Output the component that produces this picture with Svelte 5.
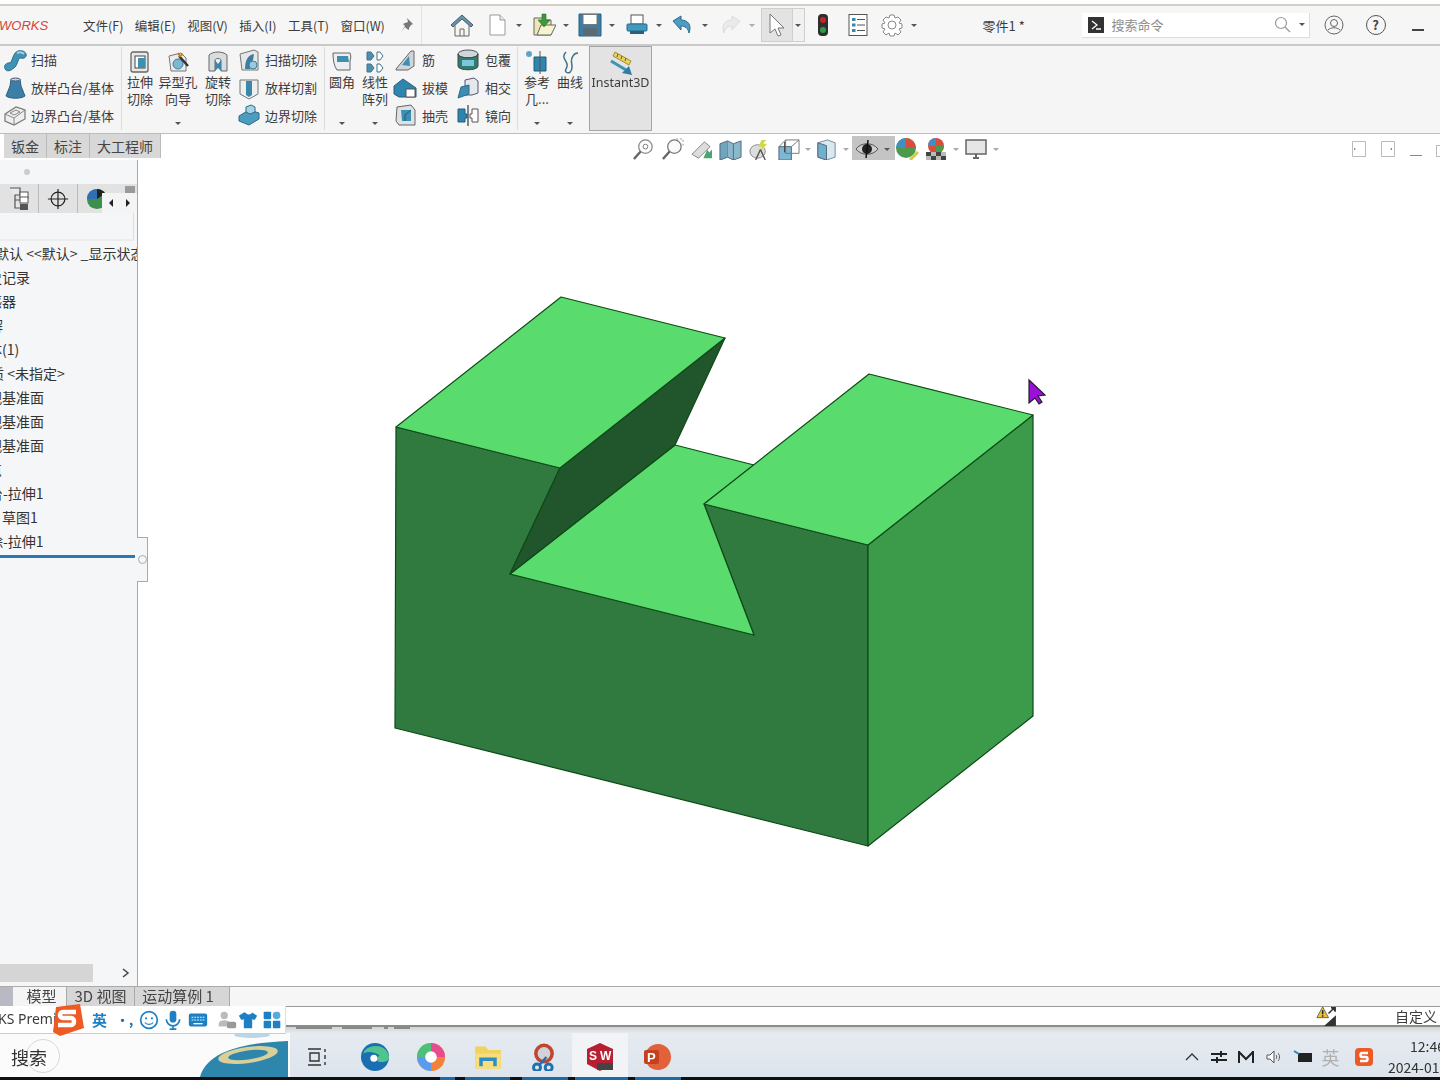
<script>
	const icons = {
		sweep: '<path d="M3 22c-3-3-1-7 3-7 4 0 3-10 9-12 3-1 7 0 8 3 1 3-2 5-5 4-3-1-3 6-6 9-3 3-7 5-9 3z" fill="#3f93b5" stroke="#2a6a88"/><path d="M14 5c2-1 5-1 7 1" stroke="#9fd3e6" fill="none" stroke-width="2"/>',
		loft: '<path d="M8 3h9l1 7 4 10c-4 3-15 3-19 0l4-10z" fill="#3c7fa6" stroke="#2c5f7f"/><ellipse cx="12.500" cy="3.500" rx="4.500" ry="1.500" fill="#b9d8e6" stroke="#557"/>',
		bound: '<path d="M2 11l11-7 9 3v9l-11 6-9-4z" fill="#eee" stroke="#777" stroke-width="1.200"/><path d="M2 11l9 4 11-8M11 15v7M7 10l6-3 4 2-6 3z" fill="none" stroke="#888"/>',
		cutExt: '<rect x="3" y="2" width="17" height="20" rx="2" fill="#e8e8e6" stroke="#666" stroke-width="1.300"/><rect x="7" y="6" width="10" height="12" fill="#fff" stroke="#444"/><rect x="10" y="8" width="7" height="10" fill="#3f8fb0"/>',
		hole: '<path d="M3 6l12-3 5 5v13H5z" fill="#ececec" stroke="#777"/><circle cx="12" cy="14" r="5" fill="#7db7d2" stroke="#3d7d9d"/><path d="M13 6l9 10" stroke="#333" stroke-width="2.500"/><path d="M12 3l2 3 3-2" fill="none" stroke="#c7851f" stroke-width="2"/>',
		cutRev: '<path d="M3 5c4-4 14-4 18 0v16h-6V10c-1-2-5-2-6 0v11H3z" fill="#d8dde0" stroke="#666"/><path d="M9 10l3 4 3-4v11l-3-3-3 3z" fill="#3c86a8"/>',
		cutSweep: '<path d="M3 6l14-4 4 2v18H5z" fill="#e5e7e8" stroke="#777"/><path d="M8 21c0-9 3-14 9-15l-1 6c-2 1-3 4-3 9z" fill="#3b7ea2"/><circle cx="16" cy="17" r="4" fill="#9dc9dc" stroke="#3d7d9d"/>',
		cutLoft: '<path d="M3 4h18v14l-9 5-9-5z" fill="#eceeef" stroke="#777"/><path d="M9 5h6v14l-3 2-3-2z" fill="#3c86a8"/>',
		cutBound: '<path d="M2 13l10-6 10 3v6l-10 6-10-4z" fill="#4c9cc0" stroke="#2c6a88"/><path d="M9 9V4l5-2 4 2v5l-5 2z" fill="#a5d2e5" stroke="#2c6a88"/>',
		fillet: '<path d="M3 3h17c1 3 1 5 0 8v9H7c-3-4-4-10-4-17z" fill="#eceeef" stroke="#666"/><path d="M7 6h11l1 6H7z" fill="#3c8fb3"/>',
		pattern: '<path d="M4 2h4l3 4-3 4H4zM4 14h4l3 4-3 4H4z" fill="#4c8fae" stroke="#47708a"/><path d="M14 2h3l3 4-3 4h-3zM14 14h3l3 4-3 4h-3z" fill="#fff" stroke="#47708a"/>',
		rib: '<path d="M3 21L18 3h3v15l-6 4H3z" fill="#cfd6d9" stroke="#666"/><path d="M9 17l7-9 1 10z" fill="#3c8fb3"/>',
		draft: '<path d="M1 10L10 3l13 9v9H6L1 18z" fill="#2f85ad" stroke="#265f7d"/><path d="M13 13h9v8h-9z" fill="#fff" stroke="#555"/>',
		shell: '<path d="M4 4l14-2 4 5v15H6L3 18z" fill="#dde2e4" stroke="#666"/><path d="M8 7h10v11H9z" fill="#3c8fb3"/><path d="M12 12l6-5M12 12v6" stroke="#1e5a78"/>',
		wrap: '<ellipse cx="12" cy="6" rx="10" ry="4" fill="#cfd6d9" stroke="#555"/><path d="M2 6v12c0 5 20 5 20 0V6c0 5-20 5-20 0z" fill="#2f7d6f" stroke="#444"/><rect x="6" y="12" width="12" height="6" fill="#7fc4dd"/>',
		intersect: '<path d="M9 4l9-2 4 3v12l-6 2H9z" fill="#e3e8ea" stroke="#557"/><path d="M2 22l3-11 8-2v9z" fill="#3c8fb3" stroke="#2c6a88"/>',
		mirror: '<path d="M2 6h7v5h2v4H9v4H2z" fill="#2f85ad" stroke="#1f5f7d"/><path d="M12 2v21" stroke="#444" stroke-width="1.300"/><path d="M22 6h-6v5h-2v4h2v4h6z" fill="#fff" stroke="#555"/>',
		ref: '<circle cx="4" cy="4" r="3" fill="#5da5c2"/><path d="M9 7h12v14H9z" fill="#2f85ad" stroke="#1f5f7d"/><path d="M15 1v24" stroke="#555"/>',
		curve: '<path d="M8 2c-5 5 0 8 1 12 1 5-3 5-1 8 3 2 6 0 6-5s-2-7 1-11c1-2 3-3 5-3" fill="none" stroke="#3f7387" stroke-width="1.500"/>',
		instant: '<path d="M6 1l16 9-2 4L4 5z" fill="#e8d25a" stroke="#8d7a20" stroke-width=".8"/><path d="M9 3l-1 3M13 5l-1 3M17 7l-1 3" stroke="#6d5f18"/><path d="M2 10l15 9" stroke="#3f93b5" stroke-width="3"/><path d="M13 22l10 2-3-9z" fill="#2f7da3"/>',
		home: '<path d="M1 12L12 2l11 10-2 2-9-8-9 8z" fill="#5f97a3" stroke="#557"/><path d="M5 12v11h14V12" fill="#f6f6ef" stroke="#666"/><path d="M10 23v-7h4v7" fill="none" stroke="#666"/>',
		doc: '<path d="M5 2h10l5 5v15H5z" fill="#fff" stroke="#999"/><path d="M15 2v5h5" fill="#eee" stroke="#999"/>',
		open: '<path d="M2 5h8l2 2h7v15H2z" fill="#efe6b4" stroke="#666"/><path d="M5 22l4-10h15l-5 10z" fill="#f7f2d0" stroke="#666"/><path d="M10 1v6H6l6 7 6-7h-4V1z" fill="#3f9a3a" stroke="#2a6a28" stroke-width=".6"/>',
		save: '<path d="M1 1h22v22H1z" fill="#3c7fa6" stroke="#2c5f7f"/><rect x="5" y="1.500" width="14" height="10" fill="#fff" stroke="#777"/><rect x="5" y="15" width="14" height="8" fill="#5d6a70"/>',
		print: '<rect x="6" y="2" width="12" height="9" fill="#fff" stroke="#555"/><rect x="2" y="11" width="20" height="7" rx="1" fill="#3f9ac0" stroke="#2c6a88"/><rect x="5" y="18" width="14" height="3" fill="#2f5f78"/>',
		undo: '<path d="M2 8l8-5v4c7 0 11 5 8 13-1-5-4-7-8-7v4z" fill="#4c9cc4" stroke="#2c6a88"/>',
		redo: '<path d="M22 8l-8-5v4C7 7 3 12 6 20c1-5 4-7 8-7v4z" fill="#e8eaec" stroke="#dcdcdc"/>',
		pointer: '<path d="M5 1v19l5-4 3 7 3-1-3-7h6z" fill="#fff" stroke="#777"/>',
		light: '<rect x="7" y="1" width="10" height="22" rx="4" fill="#2c2f2e"/><circle cx="12" cy="7" r="3" fill="#c8232b"/><circle cx="12" cy="17" r="3" fill="#2e9b4a"/>',
		list: '<rect x="3" y="1.500" width="18" height="21" fill="#fff" stroke="#555"/><rect x="6" y="5" width="3.500" height="3" fill="#3c86a8"/><rect x="6" y="10.500" width="3.500" height="3" fill="#3c86a8"/><rect x="6" y="16" width="3.500" height="3" fill="#3c86a8"/><path d="M11 6.500h8M11 12h8M11 17.500h8" stroke="#555"/>',
		gear: '<path d="M10 2h4l1 3 3-1 3 3-2 3 3 1v4l-3 1 2 3-3 3-3-2-1 3h-4l-1-3-3 2-3-3 2-3-3-1v-4l3-1-2-3 3-3 3 1z" fill="#fff" stroke="#888"/><circle cx="12" cy="12" r="4" fill="#fff" stroke="#888"/>',
		zoomFit: '<circle cx="14" cy="9" r="7" fill="#fff" stroke="#888" stroke-width="1.300"/><circle cx="14" cy="9" r="2.500" fill="none" stroke="#777"/><path d="M9 14l-7 8" stroke="#666" stroke-width="2.500"/>',
		zoomArea: '<circle cx="14" cy="9" r="7" fill="#fafafa" stroke="#777" stroke-width="1.300"/><path d="M9 14l-7 8" stroke="#666" stroke-width="2.500"/><path d="M16 1h7v7" fill="none" stroke="#999" stroke-dasharray="2"/>',
		prev: '<path d="M2 17L15 4l6 5-12 12z" fill="#ddd" stroke="#888"/><path d="M14 21l4-9 2 3 3-3v9z" fill="#4aa66f"/>',
		section: '<path d="M1 6l8-3v17l-8 3z" fill="#6fa5bd" stroke="#567"/><path d="M9 3l6 3 8-3v17l-8 3-6-3" fill="#8cb8cb" stroke="#567"/><path d="M15 6v17" stroke="#567"/>',
		dyn: '<ellipse cx="10" cy="14" rx="8" ry="7" fill="#ddd" stroke="#888"/><path d="M14 2l-3 7h4l-2 5 7-8h-4l3-4z" fill="#d2d84a"/><path d="M13 12l5 11M13 12l-5 11" stroke="#555" stroke-width="1.500"/>',
		orient: '<path d="M2 9h13v14H2z" fill="#7db7d2" stroke="#567"/><path d="M9 2h14v14H9z" fill="none" stroke="#777"/><path d="M2 9l7-7M15 9l8-7" stroke="#777"/><path d="M8 4v11" stroke="#333"/>',
		cube: '<path d="M3 5l10-3 8 3v15l-9 3-9-3z" fill="#d8e9f1" stroke="#789"/><path d="M3 5l9 3v15l-9-3z" fill="#6fb0cf" stroke="#567"/>',
		eye: '<path d="M1 12c5-7 17-7 22 0-5 7-17 7-22 0z" fill="#cfcfcf" stroke="#555"/><circle cx="12" cy="12" r="5" fill="#222"/><path d="M13 3l-2 18" stroke="#111" stroke-width="1.500"/>',
		sphere: '<circle cx="11" cy="11" r="10" fill="#4d9a4d"/><path d="M11 1a10 10 0 0 1 10 10H11z" fill="#d84d3c"/><path d="M1 11a10 10 0 0 1 10-10v10z" fill="#3f8fc5"/><path d="M15 23l8-8" stroke="#d8c74a" stroke-width="3"/>',
		scene: '<circle cx="12" cy="9" r="8" fill="#d84d3c"/><path d="M12 1a8 8 0 0 0-8 8h8z" fill="#3f8fc5"/><path d="M12 9h8a8 8 0 0 1-8 8z" fill="#4d9a4d"/><path d="M2 15h20v8H2z" fill="#bbb"/><path d="M2 15h5v4H2zM12 15h5v4h-5zM7 19h5v4H7zM17 19h5v4h-5z" fill="#444"/>',
		monitor: '<rect x="2" y="3" width="20" height="14" fill="#e6e6e6" stroke="#666" stroke-width="1.500"/><path d="M9 21h6M12 17v4" stroke="#666" stroke-width="2"/>',
		fmTree: '<path d="M3 1h10v7H8v13h5M8 13h5" fill="#e8e8e8" stroke="#555" stroke-width="1.200"/><rect x="13" y="5" width="8" height="6" fill="#fff" stroke="#555"/><rect x="13" y="10" width="8" height="6" fill="#fff" stroke="#555"/><rect x="13" y="17" width="8" height="6" fill="#555"/>',
		cross: '<circle cx="12" cy="12" r="7.500" fill="none" stroke="#222" stroke-width="1.300"/><path d="M12 1v22M1 12h22" stroke="#222" stroke-width="1.300"/>',
		globe: '<circle cx="12" cy="12" r="11" fill="#3c8f4c"/><path d="M12 1a11 11 0 0 0-11 11h11z" fill="#2f6fb5"/><path d="M12 1a11 11 0 0 1 9 5l-9 6z" fill="#222"/>',
		warn: '<path d="M8 1l7 13H1z" fill="#edc23a" stroke="#555"/><path d="M8 5v5M8 11v2" stroke="#222" stroke-width="1.800"/><path d="M12 23h11V13zM15 9l7-7M18 2h5v5" fill="#333" stroke="#333" stroke-width="1.800"/>',
		edge: '<circle cx="12" cy="12" r="12" fill="#1a6fb3"/><path d="M2 9c2-8 20-10 22 3 0 4-5 5-9 4-2-1-2-4 1-5-4-4-11-4-14-2z" fill="#4fc58d"/><circle cx="11" cy="13" r="3" fill="#fff"/>',
		chrome: '<circle cx="12" cy="12" r="12" fill="#f2bb3b"/><path d="M12 0a12 12 0 0 1 12 12H12z" fill="#e84a8f"/><path d="M0 12A12 12 0 0 1 12 0v12z" fill="#4ac07a"/><path d="M12 12h12a12 12 0 0 1-12 12z" fill="#f2813b"/><path d="M0 12a12 12 0 0 0 12 12V12z" fill="#5a9bf0"/><circle cx="12" cy="12" r="5" fill="#fff"/>',
		folder: '<path d="M1 3h9l2 3h11v16H1z" fill="#f2d25f"/><path d="M1 9h22v13H1z" fill="#f7dd7d"/><path d="M6 20v-6h12v6" fill="none" stroke="#2f8fc5" stroke-width="3"/>',
		scissor: '<circle cx="12" cy="9" r="7" fill="#cfd2d6" stroke="#c2452f" stroke-width="3"/><circle cx="6" cy="21" r="3" fill="none" stroke="#1f6fb3" stroke-width="2.500"/><circle cx="16" cy="21" r="3" fill="none" stroke="#1f6fb3" stroke-width="2.500"/><path d="M8 19l6-7" stroke="#1f6fb3" stroke-width="2"/>',
		mic: '<rect x="8" y="1" width="8" height="14" rx="4" fill="#1d7fc4"/><path d="M4 11a8 8 0 0 0 16 0M12 19v4M8 23h8" fill="none" stroke="#1d7fc4" stroke-width="2"/>',
		smile: '<circle cx="12" cy="12" r="10" fill="none" stroke="#1d7fc4" stroke-width="2"/><circle cx="8.500" cy="10" r="1.300" fill="#1d7fc4"/><circle cx="15.500" cy="10" r="1.300" fill="#1d7fc4"/><path d="M7 15c2 3 8 3 10 0" fill="none" stroke="#1d7fc4" stroke-width="1.500"/>',
		keys: '<rect x="2" y="5" width="20" height="14" rx="2" fill="#1d7fc4"/><path d="M5 9h14M5 12h14" stroke="#fff" stroke-dasharray="2 1"/><path d="M7 16h10" stroke="#fff" stroke-width="1.500"/>',
		tools: '<circle cx="9" cy="7" r="4" fill="#bbb"/><path d="M3 16c0-5 12-5 12 0v3H3z" fill="#bbb"/><rect x="12" y="14" width="10" height="7" rx="2" fill="#999"/>',
		shirt: '<path d="M7 3L1 7l3 5 3-1v11h10V11l3 1 3-5-6-4c-1 3-7 3-8 0z" fill="#1d7fc4"/>',
		grid: '<rect x="2" y="2" width="9" height="9" rx="1" fill="#1d7fc4"/><rect x="2" y="13" width="9" height="9" rx="1" fill="#1d7fc4"/><rect x="13" y="13" width="9" height="9" rx="1" fill="#1d7fc4"/><rect x="13" y="2" width="9" height="9" rx="4" fill="#5aa9df"/>'
	};

	const menus = ['文件(F)', '编辑(E)', '视图(V)', '插入(I)', '工具(T)', '窗口(W)'];
	const quick = ['doc', 'open', 'save', 'print', 'undo'];
	const views = [
		['zoomFit', 29, false], ['zoomArea', 29, false], ['prev', 29, false], ['section', 29, false],
		['dyn', 29, false], ['orient', 38, true], ['cube', 37, true]
	];
	const tree = [
		['默认 <<默认> _显示状态', -5], ['历史记录', -26], ['传感器', -26], ['注解', -25], ['实体(1)', -26],
		['材质 <未指定>', -24], ['前视基准面', -26], ['上视基准面', -26], ['右视基准面', -26], ['原点', -26],
		['凸台-拉伸1', -25], ['草图1', 2], ['切除-拉伸1', -25]
	];
	const tasks = ['edge', 'chrome', 'folder', 'scissor'];
</script>

{#snippet ic(name, size = 24)}
	<svg class="ic" width={size} height={size} viewBox="0 0 24 24">{@html icons[name]}</svg>
{/snippet}

{#snippet small(name, text)}
	<div class="row">{@render ic(name)}<span>{text}</span></div>
{/snippet}

{#snippet big(name, lines, w, caret = true)}
	<div class="big" style="width:{w}px">
		{@render ic(name)}
		<div class="big-text">{#each lines as l}<div>{l}</div>{/each}</div>
		{#if caret}<i class="caret"></i>{/if}
	</div>
{/snippet}

<div class="page">
	<div class="topline"></div>

	<div class="menubar">
		<div class="logo">WORKS</div>
		<div class="menus">
			{#each menus as m}<span>{m}</span>{/each}
		</div>
		<svg class="pin" width="16" height="16" viewBox="0 0 16 16"><path d="M9 1l6 6-2 1-2 3v2l-2-1-2-2-4 5 4-6-2-2 2-1 3-1z" fill="#777"/></svg>
		<div class="bar-sep"></div>
		<div class="qa home">{@render ic('home')}</div>
		{#each quick as q}
			<div class="qa">{@render ic(q)}<i class="caret"></i></div>
		{/each}
		<div class="qa redo">{@render ic('redo')}<i class="caret faint"></i></div>
		<div class="select">
			<div class="sel-main">{@render ic('pointer')}</div>
			<div class="sel-drop"><i class="caret"></i></div>
		</div>
		<div class="qa light">{@render ic('light')}</div>
		<div class="qa list">{@render ic('list')}</div>
		<div class="qa gear">{@render ic('gear')}<i class="caret"></i></div>
		<div class="title">零件1 *</div>
		<div class="search">
			<svg width="16" height="16" viewBox="0 0 16 16"><rect width="16" height="16" fill="#333"/><path d="M4 4l5 4-5 4M8 12h5" fill="none" stroke="#fff" stroke-width="1.300"/></svg>
			<span>搜索命令</span>
			<svg class="lens" width="17" height="17" viewBox="0 0 17 17"><circle cx="7" cy="7" r="5.500" fill="none" stroke="#999" stroke-width="1.200"/><path d="M11 11l5 5" stroke="#999" stroke-width="1.300"/></svg>
			<i class="caret"></i>
		</div>
		<svg class="user" width="20" height="20" viewBox="0 0 20 20"><circle cx="10" cy="10" r="9" fill="none" stroke="#666"/><circle cx="10" cy="8" r="3.500" fill="none" stroke="#666"/><path d="M4 15c3-3 9-3 12 0" fill="none" stroke="#666"/></svg>
		<div class="help">?</div>
		<div class="minimize"></div>
	</div>

	<div class="ribbon">
		<div class="group g1">
			<div class="col">
				{@render small('sweep', '扫描')}
				{@render small('loft', '放样凸台/基体')}
				{@render small('bound', '边界凸台/基体')}
			</div>
		</div>
		<div class="group g2">
			{@render big('cutExt', ['拉伸', '切除'], 36, false)}
			{@render big('hole', ['异型孔', '向导'], 40)}
			{@render big('cutRev', ['旋转', '切除'], 40, false)}
			<div class="col shift">
				{@render small('cutSweep', '扫描切除')}
				{@render small('cutLoft', '放样切割')}
				{@render small('cutBound', '边界切除')}
			</div>
		</div>
		<div class="group g3">
			{@render big('fillet', ['圆角'], 34)}
			{@render big('pattern', ['线性', '阵列'], 32)}
			<div class="col c-rib">
				{@render small('rib', '筋')}
				{@render small('draft', '拔模')}
				{@render small('shell', '抽壳')}
			</div>
			<div class="col c-wrap">
				{@render small('wrap', '包覆')}
				{@render small('intersect', '相交')}
				{@render small('mirror', '镜向')}
			</div>
		</div>
		<div class="group g4">
			{@render big('ref', ['参考', '几...'], 36)}
			{@render big('curve', ['曲线'], 30)}
		</div>
		<div class="instant">
			{@render ic('instant')}
			<div class="instant-text">Instant3D</div>
		</div>
	</div>

	<div class="tabrow">
		<div class="cm-tabs">
			<span>钣金</span><span>标注</span><span>大工程师</span>
		</div>
		<div class="views">
			{#each views as [name, w, caret]}
				<div class="view" style="width:{w}px">{@render ic(name, 23)}{#if caret}<i class="caret faint"></i>{/if}</div>
			{/each}
			<div class="view eye">{@render ic('eye', 24)}<i class="caret"></i></div>
			<div class="view" style="width:29px">{@render ic('sphere', 24)}</div>
			<div class="view" style="width:40px">{@render ic('scene', 24)}<i class="caret faint"></i></div>
			<div class="view" style="width:36px">{@render ic('monitor', 24)}<i class="caret faint"></i></div>
		</div>
		<div class="winbtns">
			<svg width="14" height="16" viewBox="0 0 14 16"><path d="M.5.500h13v15H.5z" fill="#fff" stroke="#bbb"/><path d="M2 7l2 1-2 1z" fill="#666"/></svg>
			<svg width="14" height="16" viewBox="0 0 14 16"><path d="M.5.500h13v15H.5z" fill="#fff" stroke="#bbb"/><path d="M11 7l-2 1 2 1z" fill="#666"/></svg>
			<div class="win-min"></div>
			<div class="win-max"></div>
		</div>
	</div>

	<div class="main">
		<aside class="side">
			<div class="grip"><i></i></div>
			<div class="side-tabs">
				<div class="st st1">{@render ic('fmTree', 24)}</div>
				<div class="st st2">{@render ic('cross', 22)}</div>
				<div class="st st3">
					{@render ic('globe', 22)}
					<div class="mini"></div>
					<div class="arrows"><i class="al"></i><i class="ar"></i></div>
				</div>
			</div>
			<div class="filter"></div>
			<div class="tree">
				{#each tree as [label, x]}
					<div class="node"><span style="margin-left:{x}px">{label}</span></div>
				{/each}
			</div>
			<div class="rollback"></div>
			<div class="side-space"></div>
			<div class="hscroll">
				<div class="thumb"></div>
				<svg width="8" height="10" viewBox="0 0 8 10"><path d="M1 1l5 4-5 4" fill="none" stroke="#444" stroke-width="1.500"/></svg>
			</div>
		</aside>
		<div class="handle"><i></i></div>

		<div class="canvas">
			<svg width="1302" height="826" viewBox="138 160 1302 826">
				<g stroke="#0e4a17" stroke-width="1.200" stroke-linejoin="round">
					<polygon points="396,427 560,468 510,574 754,635 704,504 868,545 868,846 395,728" fill="#317a3f"/>
					<polygon points="868,545 1033,415 1033,716 868,846" fill="#3c9a4b"/>
					<polygon points="510,574 675,445 754,465 704,504 754,635" fill="#5adb6d"/>
					<polygon points="725,338 560,468 510,574 675,445" fill="#21552b"/>
					<polygon points="396,427 561,297 725,338 560,468" fill="#5adb6d"/>
					<polygon points="704,504 869,374 1033,415 868,545" fill="#5adb6d"/>
				</g>
				<path d="M1029 380l0 23 6-5 4 6 3-2-4-6 7-1z" fill="#9a10d8" stroke="#222" stroke-width="1.200"/>
			</svg>
		</div>
	</div>

	<div class="modeltabs">
		<div class="mt-icon"></div>
		<span class="mt on">模型</span>
		<span class="mt w68">3D 视图</span>
		<span class="mt w95">运动算例 1</span>
	</div>

	<div class="statusbar">
		<div class="st-warn">{@render ic('warn', 20)}</div>
		<span>自定义</span>
	</div>

	<div class="strip">
		<i style="width:36px;margin-left:296px"></i><i style="width:30px;margin-left:10px"></i><i style="width:4px;margin-left:12px"></i><i style="width:16px;margin-left:6px"></i>
	</div>

	<div class="taskbar">
		<div class="tb-search">
			<span class="ring"></span>
			<span class="tb-text">搜索</span>
			<svg class="island" width="90" height="44" viewBox="0 4 90 44">
				<path d="M0 48C6 26 34 14 88 12v36z" fill="#2f86ad"/>
				<ellipse cx="48" cy="26" rx="30" ry="8" fill="#d8cf9a" transform="rotate(-8 48 26)"/>
				<ellipse cx="48" cy="26" rx="20" ry="4.500" fill="#2f86ad" transform="rotate(-8 48 26)"/>
				<ellipse cx="52" cy="6" rx="18" ry="3" fill="#bcd6e6"/>
			</svg>
		</div>
		<svg class="tv" width="20" height="20" viewBox="0 0 20 20"><path d="M1 2h13M1 18h13M3 6h9v8H3z" fill="none" stroke="#333" stroke-width="1.400"/><path d="M18 2v3M18 8v4M18 15v3" stroke="#333" stroke-width="1.400"/></svg>
		<div class="tasks">
			{#each tasks as name}
				<div class="task">{@render ic(name, 28)}</div>
			{/each}
			<div class="task active">
				<svg width="28" height="30" viewBox="0 0 28 30"><path d="M14 1l13 6v15l-13 7-13-7V7z" fill="#b81f33"/><text x="3" y="18" class="sw">S</text><text x="14" y="18" class="sw">W</text><rect x="11" y="21" width="16" height="7" fill="#444"/></svg>
			</div>
			<div class="task">
				<svg width="28" height="28" viewBox="0 0 28 28"><circle cx="15" cy="14" r="13" fill="#e0613a"/><rect x="1" y="7" width="15" height="14" rx="2" fill="#c4401f"/><text x="4" y="18.500" class="pp">P</text></svg>
			</div>
		</div>
		<div class="tray">
			<svg width="14" height="8" viewBox="0 0 14 8"><path d="M1 7l6-6 6 6" fill="none" stroke="#333" stroke-width="1.300"/></svg>
			<svg width="16" height="12" viewBox="0 0 16 12"><path d="M0 3h16M0 9h16M10 0v6M6 6v6" stroke="#222" stroke-width="2"/></svg>
			<svg width="16" height="14" viewBox="0 0 16 14"><path d="M1 1v12M15 1v12M1 2l7 7 7-7" fill="none" stroke="#222" stroke-width="2"/></svg>
			<svg width="16" height="14" viewBox="0 0 16 14"><path d="M1 5h3l4-4v12l-4-4H1z" fill="#fff" stroke="#555"/><path d="M10 5c1 1 1 3 0 4M12 3c2 2 2 6 0 8" fill="none" stroke="#666"/></svg>
			<svg width="20" height="14" viewBox="0 0 20 14"><rect x="5" y="3" width="14" height="9" fill="#222"/><path d="M1 1l5 3" stroke="#2f7fb5" stroke-width="2"/></svg>
			<span class="lang">英</span>
			<svg width="20" height="20" viewBox="0 0 20 20"><rect x="1" y="1" width="18" height="18" rx="4" fill="#ee5a24"/><path d="M14 6H8c-2 0-2 4 0 4h4c2 0 2 4 0 4H6" fill="none" stroke="#fff" stroke-width="2.500"/></svg>
		</div>
		<div class="clock"><span>12:46</span><span>2024-01-</span></div>
	</div>

	<div class="edge-line">
		<i style="left:440px;width:15px"></i>
		<i style="left:465px;width:45px"></i>
		<i style="left:522px;width:46px"></i>
		<i style="left:575px;width:53px"></i>
		<i style="left:635px;width:46px"></i>
	</div>

	<div class="ime">
		<span class="tip">KS Premi</span>
		<svg class="sogou" width="34" height="32" viewBox="0 0 34 32"><path d="M6 3l24-3 4 24-24 8-7-4z" fill="#ee5a24"/><path d="M26 8H13c-4 0-4 6 0 6h8c4 0 4 7 0 7H8" fill="none" stroke="#fff" stroke-width="4.500"/></svg>
		<span class="ime-en">英</span>
		<span class="ime-dot">•,</span>
		{@render ic('smile', 20)}
		{@render ic('mic', 20)}
		{@render ic('keys', 22)}
		<span class="ime-gap"></span>
		{@render ic('tools', 22)}
		<span class="ime-back"></span>
		{@render ic('shirt', 20)}
		{@render ic('grid', 20)}
	</div>
</div>

<style>
	:global(body) {
		margin: 0;
		background: #fff;
	}

	.page {
		position: relative;
		width: 1440px;
		height: 1080px;
		overflow: hidden;
		display: flex;
		flex-direction: column;
		font-family: "Noto Sans CJK SC", "Noto Sans", sans-serif;
		font-size: 13px;
		color: #3c3c3c;
		filter: blur(0.35px);
	}

	.ic {
		display: block;
		flex: none;
	}

	.caret {
		display: block;
		flex: none;
		width: 0;
		height: 0;
		border: 3px solid transparent;
		border-top: 3px solid #555;
		border-bottom: 0;
	}

	.caret.faint {
		border-top-color: #aaa;
	}

	.topline {
		height: 4px;
		background: #fff;
		border-bottom: 2px solid #d3d0c8;
		flex: none;
	}

	.menubar {
		height: 38px;
		flex: none;
		display: flex;
		align-items: center;
		background: #f6f6f6;
		border-bottom: 2px solid #c9c9c9;
	}

	.logo {
		width: 83px;
		flex: none;
		margin-left: -1px;
		font-family: "Liberation Sans", sans-serif;
		font-style: italic;
		font-size: 13px;
		color: #d3443c;
	}

	.menus {
		display: flex;
		gap: 11.500px;
		width: 311px;
		margin-left: 1px;
		flex: none;
		font-size: 12.500px;
		white-space: nowrap;
	}

	.pin {
		flex: none;
		margin-left: 4px;
	}

	.bar-sep {
		width: 1px;
		height: 38px;
		margin-left: 7px;
		background: #e2e2e2;
		flex: none;
	}

	.qa {
		width: 46.500px;
		flex: none;
		display: flex;
		align-items: center;
		gap: 7px;
	}

	.qa.home {
		width: 35px;
		margin-left: 28px;
	}

	.qa.redo {
		width: 43px;
	}

	.select {
		width: 44px;
		height: 34px;
		flex: none;
		display: flex;
		box-sizing: border-box;
		border: 1px solid #cfcfcf;
		background: #f1f1f1;
	}

	.sel-main {
		width: 30px;
		background: #e3e3e3;
		border-right: 1px solid #cfcfcf;
		display: flex;
		align-items: center;
		justify-content: center;
	}

	.sel-drop {
		flex: 1;
		display: flex;
		align-items: center;
		justify-content: center;
	}

	.qa.light {
		width: 24px;
		margin-left: 6px;
	}

	.qa.list {
		width: 24px;
		margin-left: 11px;
	}

	.qa.gear {
		width: 40px;
		margin-left: 10px;
	}

	.title {
		width: 42px;
		margin-left: 63px;
		flex: none;
		white-space: nowrap;
	}

	.search {
		width: 228px;
		height: 25px;
		margin-left: 57px;
		flex: none;
		box-sizing: border-box;
		background: #fff;
		border-right: 1px solid #ddd;
		border-bottom: 1px solid #ddd;
		display: flex;
		align-items: center;
		padding: 0 4px 0 6px;
		color: #8d8d8d;
	}

	.search span {
		margin-left: 8px;
		flex: 1;
	}

	.lens {
		margin-right: 8px;
	}

	.user {
		margin-left: 14px;
		flex: none;
	}

	.help {
		width: 18px;
		height: 18px;
		margin-left: 22px;
		flex: none;
		border: 1px solid #555;
		border-radius: 50%;
		text-align: center;
		line-height: 18px;
		font-size: 13px;
		font-weight: 700;
		color: #444;
	}

	.minimize {
		width: 12px;
		height: 2px;
		margin: 10px 0 0 26px;
		flex: none;
		background: #444;
	}

	.ribbon {
		height: 87px;
		flex: none;
		display: flex;
		background: #f5f5f5;
		border-bottom: 1px solid #bdbdbd;
	}

	.group {
		flex: none;
		display: flex;
		box-sizing: border-box;
		border-right: 1px solid #dcdcdc;
		margin: 1px 0 3px;
	}

	.g1 {
		width: 122px;
	}

	.g2 {
		width: 203px;
	}

	.g3 {
		width: 193px;
	}

	.g4 {
		width: 71px;
		padding-left: 1px;
		border-right: 0;
	}

	.col {
		display: flex;
		flex-direction: column;
		flex: none;
	}

	.shift {
		margin-left: -4px;
	}

	.c-rib {
		margin-left: -1px;
		width: 63px;
	}

	.c-wrap {
		width: 60px;
	}

	.row {
		height: 28.500px;
		display: flex;
		align-items: center;
		padding-left: 3px;
		margin-top: -1px;
		margin-bottom: 1px;
		gap: 5px;
		white-space: nowrap;
	}

	.g1 .row {
		gap: 4px;
	}

	.shift .row {
		gap: 4px;
	}

	.big {
		flex: none;
		display: flex;
		flex-direction: column;
		align-items: center;
		padding: 3px 0 5px;
		box-sizing: border-box;
	}

	.big-text {
		line-height: 17px;
		text-align: center;
		white-space: nowrap;
		margin-top: -1px;
	}

	.big .caret {
		margin-top: auto;
	}

	.instant {
		width: 63px;
		height: 85px;
		flex: none;
		box-sizing: border-box;
		background: #e3e3e3;
		border: 1px solid #a5a5a5;
		display: flex;
		flex-direction: column;
		align-items: center;
		padding-top: 4px;
	}

	.instant-text {
		font-family: "Noto Sans", sans-serif;
		font-size: 12.500px;
		line-height: 17px;
		margin-top: -1px;
	}

	.tabrow {
		height: 26px;
		flex: none;
		display: flex;
		align-items: center;
		background: #fff;
		position: relative;
	}

	.cm-tabs {
		display: flex;
		width: 632px;
		flex: none;
		height: 24px;
		align-self: flex-start;
		padding-left: 4px;
		box-sizing: border-box;
	}

	.cm-tabs span {
		padding: 0 7px;
		background: #d8d8d8;
		border-right: 1px solid #bbb;
		font-size: 14px;
		line-height: 24px;
		color: #444;
	}

	.views {
		display: flex;
		align-items: center;
		flex: none;
		height: 26px;
		margin-top: 4px;
	}

	.view {
		display: flex;
		align-items: center;
		gap: 5px;
		flex: none;
	}

	.view.eye {
		width: 43px;
		height: 26px;
		padding-left: 3px;
		box-sizing: border-box;
		background: #c4c4c4;
	}

	.winbtns {
		display: flex;
		align-items: center;
		margin-left: auto;
		gap: 15px;
		margin-right: -6px;
		margin-top: 4px;
	}

	.win-min {
		width: 12px;
		height: 1px;
		background: #888;
		margin-top: 13px;
	}

	.win-max {
		width: 8px;
		height: 10px;
		border: 1px solid #bbb;
		margin-left: -1px;
		margin-top: 3px;
	}

	.main {
		height: 826px;
		flex: none;
		display: flex;
		position: relative;
	}

	.side {
		width: 138px;
		flex: none;
		box-sizing: border-box;
		background: #f5f6f7;
		border-right: 1px solid #a8a8a8;
		display: flex;
		flex-direction: column;
		overflow: hidden;
	}

	.grip {
		height: 24px;
		flex: none;
		display: flex;
		align-items: center;
		padding-left: 24px;
	}

	.grip i {
		width: 6px;
		height: 6px;
		border-radius: 50%;
		background: #ccc;
	}

	.side-tabs {
		height: 29px;
		flex: none;
		display: flex;
		background: #e2e2e2;
	}

	.st {
		display: flex;
		align-items: center;
		box-sizing: border-box;
		justify-content: center;
		border-right: 1px solid #bbb;
		flex: none;
	}

	.st1 {
		width: 39px;
	}

	.st2 {
		width: 39px;
	}

	.st3 {
		flex: 1;
		position: relative;
		border-right: 0;
		justify-content: flex-start;
		padding-left: 8px;
	}

	.mini {
		position: absolute;
		left: 47px;
		top: 2px;
		width: 10px;
		height: 7px;
		background: #9a9a9a;
	}

	.arrows {
		position: absolute;
		left: 24px;
		top: 9px;
		width: 35px;
		height: 20px;
		display: flex;
		background: #f4f4f4;
		align-items: center;
		justify-content: space-around;
	}

	.al,
	.ar {
		width: 0;
		height: 0;
		border: 4px solid transparent;
	}

	.al {
		border-right-color: #222;
		border-left: 0;
	}

	.ar {
		border-left-color: #222;
		border-right: 0;
	}

	.filter {
		height: 28px;
		flex: none;
		box-sizing: border-box;
		border-bottom: 2px solid #ececec;
		border-right: 1px solid #dedede;
		margin-right: 3px;
	}

	.node {
		height: 24px;
		line-height: 24px;
		font-size: 14px;
		white-space: nowrap;
		overflow: hidden;
		color: #333;
	}

	.rollback {
		height: 3px;
		flex: none;
		margin: 2px 2px 0 0;
		background: #2d78b4;
	}

	.side-space {
		flex: 1;
	}

	.hscroll {
		height: 18px;
		flex: none;
		margin-bottom: 4px;
		display: flex;
		align-items: center;
	}

	.thumb {
		width: 93px;
		height: 18px;
		background: #d5d5d5;
		margin-right: 29px;
	}

	.handle {
		position: absolute;
		left: 137px;
		top: 377px;
		width: 11px;
		height: 45px;
		box-sizing: border-box;
		background: #f5f6f7;
		border: 1px solid #aaa;
		border-left: 0;
		display: flex;
		align-items: center;
		justify-content: center;
		z-index: 1;
	}

	.handle i {
		width: 7px;
		height: 7px;
		border: 1px solid #aaa;
		border-radius: 50%;
	}

	.canvas {
		flex: 1;
		background: #fff;
		position: relative;
	}

	.canvas svg {
		display: block;
	}

	.modeltabs {
		height: 19px;
		flex: none;
		display: flex;
		background: #f6f6f6;
		border-top: 1px solid #aaa;
		font-size: 15px;
		line-height: 17px;
		color: #444;
	}

	.mt-icon {
		width: 13px;
		background: #b9b9c4;
	}

	.mt {
		text-align: center;
		background: #d6d6d6;
		border-right: 1px solid #aaa;
		box-sizing: border-box;
		white-space: nowrap;
	}

	.mt.on {
		width: 54px;
		padding-left: 4px;
		background: #f4f4f4;
	}

	.w68 {
		width: 68px;
	}

	.w95 {
		width: 95px;
		padding-right: 8px;
	}

	.statusbar {
		height: 18px;
		flex: none;
		display: flex;
		align-items: center;
		justify-content: flex-end;
		background: #fff;
		border-top: 1px solid #999;
		border-bottom: 2px solid #8c8c8c;
		font-size: 14px;
		white-space: nowrap;
	}

	.statusbar span {
		margin-right: 3px;
		margin-left: 59px;
		line-height: 18px;
	}

	.strip {
		height: 6px;
		flex: none;
		display: flex;
		background: linear-gradient(180deg, #d2d2d2, #e6eaef);
	}

	.strip i {
		height: 1.500px;
		background: #888;
	}

	.taskbar {
		height: 44px;
		flex: none;
		display: flex;
		align-items: center;
		background: linear-gradient(180deg, #e6ebf1, #dde4ec);
		position: relative;
	}

	.tb-search {
		width: 290px;
		height: 44px;
		flex: none;
		display: flex;
		align-items: center;
		position: relative;
		overflow: hidden;
		background: #fbfbfc;
	}

	.ring {
		position: absolute;
		left: 26px;
		top: 6px;
		width: 32px;
		height: 32px;
		border: 1px solid #d8d8d8;
		border-radius: 50%;
	}

	.tb-text {
		margin: 3px 0 0 11px;
		font-size: 18px;
		color: #333;
		position: relative;
	}

	.island {
		position: absolute;
		right: 0;
		bottom: 0;
	}

	.tv {
		margin: 4px 0 0 17px;
		flex: none;
	}

	.tasks {
		display: flex;
		align-items: center;
		margin-left: 20px;
		height: 44px;
		flex: none;
	}

	.task {
		width: 56.300px;
		height: 44px;
		flex: none;
		display: flex;
		align-items: center;
		justify-content: center;
		box-sizing: border-box;
		padding-top: 4px;
	}

	.task.active {
		background: #f1f3f6;
	}

	.sw {
		font-family: "Liberation Sans", sans-serif;
		font-weight: 700;
		font-size: 12px;
		fill: #fff;
	}

	.pp {
		font-family: "Liberation Sans", sans-serif;
		font-weight: 700;
		font-size: 13px;
		fill: #fff;
	}

	.tray {
		position: absolute;
		left: 1185px;
		top: 2px;
		height: 44px;
		display: flex;
		align-items: center;
		gap: 11.500px;
	}

	.lang {
		font-size: 18px;
		margin: 0 3px 0 -3px;
		color: #b0b0b0;
	}

	.clock {
		position: absolute;
		right: -18px;
		top: 3px;
		width: 70px;
		display: flex;
		flex-direction: column;
		align-items: flex-start;
		line-height: 21px;
		font-size: 14px;
		white-space: nowrap;
		color: #333;
	}

	.clock span:first-child {
		margin-left: 22px;
	}

	.edge-line {
		height: 3px;
		flex: none;
		background: #111;
		position: relative;
	}

	.edge-line i {
		position: absolute;
		top: 0;
		height: 3px;
		background: #1f6aa5;
	}

	.ime {
		position: absolute;
		left: 0;
		top: 1006px;
		width: 286px;
		height: 28px;
		display: flex;
		align-items: center;
		box-sizing: border-box;
		background: #fff;
		border-bottom: 1px solid #ccc;
		border-right: 1px solid #ddd;
	}

	.tip {
		font-family: "Noto Sans", sans-serif;
		font-size: 14px;
		width: 52px;
		flex: none;
		margin-left: -2px;
		margin-top: -3px;
		white-space: nowrap;
	}

	.sogou {
		flex: none;
		margin-top: 1px;
		position: relative;
	}

	.ime-en {
		margin-left: 8px;
		font-size: 15px;
		font-weight: 700;
		color: #1d7fc4;
	}

	.ime-dot {
		margin: 0 6px 0 9px;
		font-weight: 700;
		color: #1d6f9c;
	}

	.ime-gap {
		width: 3px;
		flex: none;
	}

	.ime-back {
		margin-right: -4px;
		flex: none;
	}

	.ime .ic {
		margin-right: 4px;
	}
</style>
